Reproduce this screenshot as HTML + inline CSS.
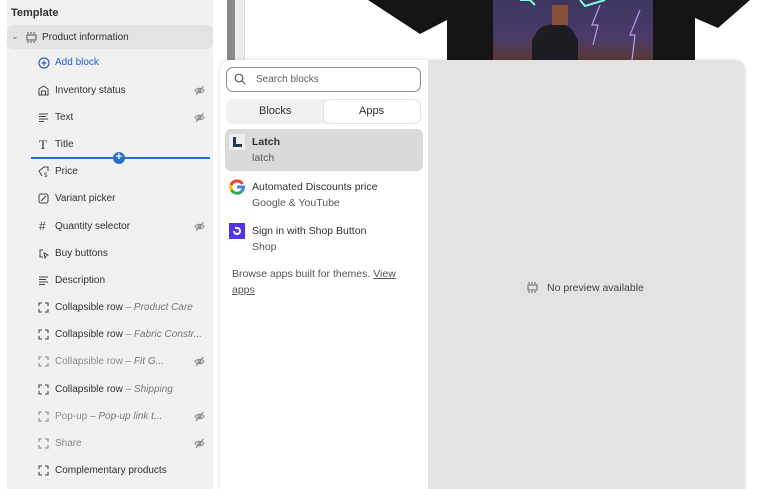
<!DOCTYPE html>
<html><head><style>
*{margin:0;padding:0;box-sizing:border-box}
body{width:768px;height:489px;overflow:hidden;background:#fff;font-family:"Liberation Sans",sans-serif;position:relative;color:#303030}
.abs{position:absolute}
.side{left:7px;top:0;width:206px;height:489px;background:#f1f1f1}
.item{position:absolute;left:55px;font-size:10px;white-space:nowrap;margin-top:1px}
.ic{position:absolute;left:38px;width:11px;height:11px;margin-top:1px}
.eye{position:absolute;left:194px;width:11px;height:11px;margin-top:1px}
.g{color:#8a8a8a}
i{font-style:italic;color:#777}
</style></head><body>
<div class="abs" style="left:0;top:0;width:7px;height:489px;background:#fff"></div>
<div class="abs side"></div>
<div class="abs" style="left:11px;top:7px;font-size:11px;font-weight:bold;color:#303030">Template</div>
<div class="abs" style="left:7px;top:25px;width:206px;height:24px;background:#e3e3e3;border-radius:6px"></div>
<div class="abs" style="left:11px;top:31px;font-size:9px;color:#666">&#8964;</div>
<svg class="abs" style="left:26px;top:32px" width="11" height="11" viewBox="0 0 11 11" fill="none" stroke="#555" stroke-width="1"><rect x="1" y="3" width="9" height="5" /><path d="M1 1h9M1 10h9" stroke-dasharray="2 1"/></svg>
<div class="abs" style="left:42px;top:32px;font-size:10px">Product information</div>
<svg class="abs" style="left:38px;top:57px" width="12" height="12" viewBox="0 0 12 12" fill="none" stroke="#1f5fd6" stroke-width="1.2"><circle cx="6" cy="6" r="5"/><path d="M6 3.5v5M3.5 6h5"/></svg>
<div class="item" style="top:56px;color:#1f5fd6">Add block</div>

<svg class="ic" style="top:84px" viewBox="0 0 11 11" fill="none" stroke="#444"><path d="M1 10V4l4.5-3 4.5 3v6zM3.5 10V6h4v4"/></svg><div class="item" style="top:84px">Inventory status</div>
<svg class="ic" style="top:111px" viewBox="0 0 11 11" stroke="#444"><path d="M1 2h9M1 4.5h7M1 7h9M1 9.5h5"/></svg><div class="item" style="top:111px">Text</div>
<div class="item" style="left:39px;top:136px;font-size:13px;font-family:'Liberation Serif',serif">T</div><div class="item" style="top:138px">Title</div>
<div class="abs" style="left:31px;top:157px;width:179px;height:2px;background:#2c6ecb"></div>
<div class="abs" style="left:113px;top:152px;width:12px;height:12px;border-radius:6px;background:#2c6ecb;color:#fff;font-size:11px;line-height:11px;text-align:center;font-weight:bold">+</div>
<svg class="ic" style="top:165px" viewBox="0 0 11 11" fill="none" stroke="#444"><path d="M6 1L1 5l3 5M6 1h4v4"/><text x="6" y="11" font-size="6" fill="#444" stroke="none">$</text></svg><div class="item" style="top:165px">Price</div>
<svg class="ic" style="top:192px" viewBox="0 0 11 11" fill="none" stroke="#444"><rect x="1" y="1" width="9" height="9" rx="2"/><path d="M3 8l5-5"/></svg><div class="item" style="top:192px">Variant picker</div>
<div class="item" style="left:39px;top:218px;font-size:12px;color:#444">#</div><div class="item" style="top:220px">Quantity selector</div>
<svg class="ic" style="top:247px" viewBox="0 0 11 11" fill="none" stroke="#444"><path d="M5 2H2v7h3M6 5l4 2-2 1-1 2z"/></svg><div class="item" style="top:247px">Buy buttons</div>
<svg class="ic" style="top:274px" viewBox="0 0 11 11" stroke="#444"><path d="M1 2h9M1 4.5h7M1 7h9M1 9.5h6"/></svg><div class="item" style="top:274px">Description</div>

<svg class="ic" style="top:301px" viewBox="0 0 11 11" fill="none" stroke="#444" stroke-width="1.1"><path d="M1 4V1h3M7 1h3v3M10 7v3H7M4 10H1V7"/></svg><div class="item" style="top:301px">Collapsible row <i>– Product Care</i></div>
<svg class="ic" style="top:328px" viewBox="0 0 11 11" fill="none" stroke="#444" stroke-width="1.1"><path d="M1 4V1h3M7 1h3v3M10 7v3H7M4 10H1V7"/></svg><div class="item" style="top:328px">Collapsible row <i>– Fabric Constr...</i></div>
<svg class="ic" style="top:355px" viewBox="0 0 11 11" fill="none" stroke="#888" stroke-width="1.1"><path d="M1 4V1h3M7 1h3v3M10 7v3H7M4 10H1V7"/></svg><div class="item g" style="top:355px">Collapsible row <i>– Fit G...</i></div>
<svg class="ic" style="top:383px" viewBox="0 0 11 11" fill="none" stroke="#444" stroke-width="1.1"><path d="M1 4V1h3M7 1h3v3M10 7v3H7M4 10H1V7"/></svg><div class="item" style="top:383px">Collapsible row <i>– Shipping</i></div>
<svg class="ic" style="top:410px" viewBox="0 0 11 11" fill="none" stroke="#888" stroke-width="1.1"><path d="M1 4V1h3M7 1h3v3M10 7v3H7M4 10H1V7"/></svg><div class="item g" style="top:410px">Pop-up <i>– Pop-up link t...</i></div>
<svg class="ic" style="top:437px" viewBox="0 0 11 11" fill="none" stroke="#888" stroke-width="1.1"><path d="M1 4V1h3M7 1h3v3M10 7v3H7M4 10H1V7"/></svg><div class="item g" style="top:437px">Share</div>
<svg class="ic" style="top:464px" viewBox="0 0 11 11" fill="none" stroke="#444" stroke-width="1.1"><path d="M1 4V1h3M7 1h3v3M10 7v3H7M4 10H1V7"/></svg><div class="item" style="top:464px">Complementary products</div>

<svg width="0" height="0" style="position:absolute"><symbol id="eye" viewBox="0 0 11 11"><g fill="none" stroke="#8a8a8a" stroke-width="1"><path d="M1 5.5C3 2.5 8 2.5 10 5.5 8 8.5 3 8.5 1 5.5z"/><circle cx="5.5" cy="5.5" r="1.5"/><path d="M2 10L9.5 1"/></g></symbol></svg>
<svg class="eye" style="top:84px"><use href="#eye"/></svg>
<svg class="eye" style="top:111px"><use href="#eye"/></svg>
<svg class="eye" style="top:220px"><use href="#eye"/></svg>
<svg class="eye" style="top:355px"><use href="#eye"/></svg>
<svg class="eye" style="top:410px"><use href="#eye"/></svg>
<svg class="eye" style="top:437px"><use href="#eye"/></svg>

<div class="abs" style="left:227px;top:0;width:8px;height:60px;background:#8a8a8a"></div>
<div class="abs" style="left:235px;top:0;width:10px;height:60px;background:#ececec"></div>
<div class="abs" style="left:244px;top:0;width:1px;height:60px;background:#ddd"></div>
<svg class="abs" style="left:340px;top:0" width="428" height="62" viewBox="0 0 428 62">
<defs><linearGradient id="pr" x1="0" y1="0" x2="0" y2="1"><stop offset="0" stop-color="#3d3660"/><stop offset=".6" stop-color="#4a3a6a"/><stop offset="1" stop-color="#5a3a30"/></linearGradient></defs>
<path d="M28 0L80 34 107 20 107 62 355 62 355 18 378 28 410 0z" fill="#141414"/>
<path d="M153 0h160v62H153z" fill="url(#pr)"/>
<path d="M198 30c8-8 28-8 34 0l6 10v22h-46V40z" fill="#1c1c22"/>
<path d="M212 5h16v20h-16z" fill="#8a5038"/>
<path d="M260 5l-8 20 6 0-5 20M300 10l-10 25 5 0-3 25" stroke="#b79cf0" stroke-width="1.2" fill="none"/>
<path d="M180 0h10l5 5M240 0l5 6 20-6" stroke="#7fd" stroke-width="2" fill="none"/>
</svg>
<div class="abs" style="left:220px;top:60px;width:525px;height:429px;background:#e3e3e3;border-radius:10px 10px 0 0;box-shadow:0 0 3px rgba(0,0,0,.15)"></div>
<div class="abs" style="left:220px;top:60px;width:208px;height:429px;background:#fff;border-radius:10px 0 0 0"></div>
<div class="abs" style="left:226px;top:67px;width:195px;height:25px;border:1px solid #8a8a8a;border-radius:7px"></div>
<svg class="abs" style="left:234px;top:73px" width="12" height="12" viewBox="0 0 12 12" fill="none" stroke="#555" stroke-width="1.2"><circle cx="5" cy="5" r="3.8"/><path d="M8 8l3 3"/></svg>
<div class="abs" style="left:256px;top:74px;font-size:10px;color:#616161">Search blocks</div>
<div class="abs" style="left:226px;top:99px;width:195px;height:25px;background:#f1f1f1;border-radius:7px"></div>
<div class="abs" style="left:324px;top:100px;width:96px;height:23px;background:#fff;border-radius:6px;box-shadow:0 0 0 1px #e3e3e3"></div>
<div class="abs" style="left:259px;top:105px;font-size:11px">Blocks</div>
<div class="abs" style="left:359px;top:105px;font-size:11px">Apps</div>
<div class="abs" style="left:225px;top:129px;width:198px;height:42px;background:#d9dad9;border-radius:6px"></div>
<div class="abs" style="left:229px;top:134px;width:16px;height:16px;background:#eee"></div>
<div class="abs" style="left:233px;top:137px;width:3px;height:10px;background:#2a3550"></div>
<div class="abs" style="left:233px;top:144px;width:9px;height:3px;background:#2a3550"></div>
<div class="abs" style="left:252px;top:136px;font-size:10.5px;font-weight:bold">Latch</div>
<div class="abs" style="left:252px;top:152px;font-size:10.5px;color:#555">latch</div>
<svg class="abs" style="left:229px;top:179px" width="16" height="16" viewBox="0 0 16 16" fill="none" stroke-width="3"><path d="M13.5 5A6.5 6.5 0 0 0 2 6" stroke="#ea4335"/><path d="M2 6A6.5 6.5 0 0 0 2.5 11" stroke="#fbbc05"/><path d="M2.5 11A6.5 6.5 0 0 0 13 12" stroke="#34a853"/><path d="M13 12A6.5 6.5 0 0 0 14.5 8H8" stroke="#4285f4"/></svg>
<div class="abs" style="left:252px;top:181px;font-size:10.5px">Automated Discounts price</div>
<div class="abs" style="left:252px;top:197px;font-size:10.5px;color:#555">Google &amp; YouTube</div>
<div class="abs" style="left:229px;top:223px;width:16px;height:16px;background:#5433eb"></div>
<svg class="abs" style="left:229px;top:223px" width="16" height="16" viewBox="0 0 16 16" fill="none" stroke="#fff" stroke-width="2"><path d="M6 5h2a3 3 0 0 1 0 6 3 3 0 0 1-3-3"/></svg>
<div class="abs" style="left:252px;top:225px;font-size:10.5px">Sign in with Shop Button</div>
<div class="abs" style="left:252px;top:241px;font-size:10.5px;color:#555">Shop</div>
<div class="abs" style="left:232px;top:266px;width:185px;font-size:10.5px;line-height:16px;color:#555">Browse apps built for themes. <u>View apps</u></div>
<svg class="abs" style="left:527px;top:282px" width="11" height="11" viewBox="0 0 11 11" fill="none" stroke="#666"><rect x="1" y="3" width="9" height="5"/><path d="M1 1h9M1 10h9" stroke-dasharray="2 1"/></svg>
<div class="abs" style="left:547px;top:282px;font-size:10.5px;color:#444">No preview available</div>
</body></html>
